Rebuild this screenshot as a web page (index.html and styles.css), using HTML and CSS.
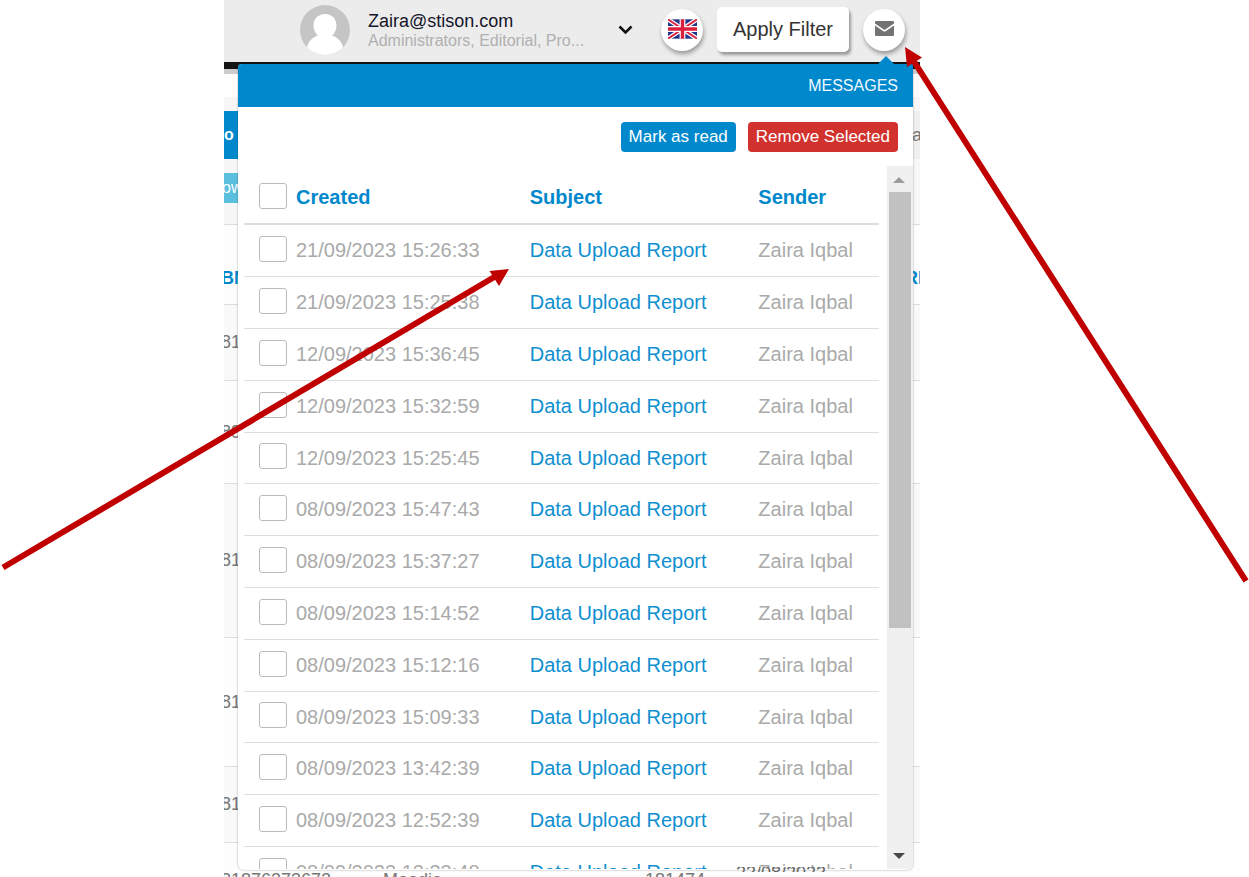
FILE: index.html
```html
<!DOCTYPE html>
<html lang="en">
<head>
<meta charset="utf-8">
<title>Messages</title>
<link rel="stylesheet" href="styles.css">
</head>
<body>
<div class="board">
  <main class="app">
    <header class="topbar">
      <svg class="avatar" viewBox="0 0 50 50" aria-hidden="true">
        <defs><clipPath id="disc"><circle cx="25" cy="25" r="25"/></clipPath></defs>
        <g clip-path="url(#disc)"><rect width="50" height="50" fill="#c5c5c5"/>
        <path d="M25 9c-7 0-11.500 5-11.500 11.500 0 4 1.500 7.500 4.500 10C12.500 32.500 8 36 7 43v9h36v-9c-1-7-5.500-10.500-11-12.500 3-2.500 4.500-6 4.500-10C36.500 14 32 9 25 9z" fill="#fff"/></g>
      </svg>
      <div class="user">
        <div class="user-name">Zaira@stison.com</div>
        <div class="user-roles">Administrators, Editorial, Pro...</div>
      </div>
      <button class="caret" aria-label="Account menu"><svg width="15" height="10" viewBox="0 0 15 10"><path d="M1.500 1.500l6 6 6-6" fill="none" stroke="#111" stroke-width="2.600"/></svg></button>
      <button class="round" aria-label="Language"><svg width="29" height="20" viewBox="0 0 60 40">
        <rect width="60" height="40" fill="#21348a"/>
        <path d="M0 0l60 40M60 0L0 40" stroke="#fff" stroke-width="9"/>
        <path d="M0 0l60 40M60 0L0 40" stroke="#dc2440" stroke-width="4"/>
        <path d="M30 0v40M0 20h60" stroke="#fff" stroke-width="12"/>
        <path d="M30 0v40M0 20h60" stroke="#dc1f3c" stroke-width="7"/></svg></button>
      <button class="filter">Apply Filter</button>
      <button class="round" aria-label="Messages"><svg width="19" height="15" viewBox="0 0 19 15">
        <path d="M1 0h17Q19 0 19 1v1.500L9.500 9 0 2.500V1Q0 0 1 0z" fill="#737373"/>
        <path d="M0 4.500l8 5.500q1.500 1 3 0l8-5.500V14q0 1-1 1H1Q0 15 0 14z" fill="#737373"/></svg></button>
    </header>

    <section class="page">
      <div class="band"></div>
      <div class="toolbar"><button class="tab">o</button><span class="tool-text">a</span></div>
      <div class="subbar"><button class="show">ow</button></div>
      <div class="grid-head"><span>BN</span><span class="head-end">RI</span></div>
      <div class="line line-s">81</div>
      <div class="line line-m alt">89</div>
      <div class="line line-xl">81</div>
      <div class="line line-l alt">81</div>
      <div class="line line-s">81</div>
      <div class="line line-s cells alt"><span>81876373672</span><span>Moodie</span><span>181474</span></div>
    </section>

    <section class="panel" aria-label="Messages">
      <h2 class="panel-title">MESSAGES</h2>
      <div class="panel-body">
        <div class="actions"><button class="btn btn-read">Mark as read</button><button class="btn btn-remove">Remove Selected</button></div>
        <div class="scroller">
          <table class="messages">
            <colgroup><col class="col-created"><col class="col-subject"><col class="col-sender"></colgroup>
            <thead><tr><th><label class="pick"><input type="checkbox">Created</label></th><th>Subject</th><th>Sender</th></tr></thead>
            <tbody>
              <tr><td><label class="pick"><input type="checkbox">21/09/2023 15:26:33</label></td><td><a href="#">Data Upload Report</a></td><td>Zaira Iqbal</td></tr>
              <tr><td><label class="pick"><input type="checkbox">21/09/2023 15:25:38</label></td><td><a href="#">Data Upload Report</a></td><td>Zaira Iqbal</td></tr>
              <tr><td><label class="pick"><input type="checkbox">12/09/2023 15:36:45</label></td><td><a href="#">Data Upload Report</a></td><td>Zaira Iqbal</td></tr>
              <tr><td><label class="pick"><input type="checkbox">12/09/2023 15:32:59</label></td><td><a href="#">Data Upload Report</a></td><td>Zaira Iqbal</td></tr>
              <tr><td><label class="pick"><input type="checkbox">12/09/2023 15:25:45</label></td><td><a href="#">Data Upload Report</a></td><td>Zaira Iqbal</td></tr>
              <tr><td><label class="pick"><input type="checkbox">08/09/2023 15:47:43</label></td><td><a href="#">Data Upload Report</a></td><td>Zaira Iqbal</td></tr>
              <tr><td><label class="pick"><input type="checkbox">08/09/2023 15:37:27</label></td><td><a href="#">Data Upload Report</a></td><td>Zaira Iqbal</td></tr>
              <tr><td><label class="pick"><input type="checkbox">08/09/2023 15:14:52</label></td><td><a href="#">Data Upload Report</a></td><td>Zaira Iqbal</td></tr>
              <tr><td><label class="pick"><input type="checkbox">08/09/2023 15:12:16</label></td><td><a href="#">Data Upload Report</a></td><td>Zaira Iqbal</td></tr>
              <tr><td><label class="pick"><input type="checkbox">08/09/2023 15:09:33</label></td><td><a href="#">Data Upload Report</a></td><td>Zaira Iqbal</td></tr>
              <tr><td><label class="pick"><input type="checkbox">08/09/2023 13:42:39</label></td><td><a href="#">Data Upload Report</a></td><td>Zaira Iqbal</td></tr>
              <tr><td><label class="pick"><input type="checkbox">08/09/2023 12:52:39</label></td><td><a href="#">Data Upload Report</a></td><td>Zaira Iqbal</td></tr>
              <tr><td><label class="pick"><input type="checkbox">08/09/2023 12:33:48</label></td><td><a href="#">Data Upload Report</a></td><td>Zaira Iqbal</td></tr>
            </tbody>
          </table>
          <div class="track" aria-hidden="true">
            <svg class="step" viewBox="0 0 24 26"><path d="M6 17l6-6 6 6z" fill="#9c9c9c"/></svg>
            <div class="rail"><div class="thumb"></div></div>
            <svg class="step" viewBox="0 0 24 26"><path d="M6 10l6 6 6-6z" fill="#484848"/></svg>
          </div>
        </div>
      </div>
    </section>
    <div class="date-peek">23/08/2023</div>
  </main>

  <svg class="arrows" viewBox="0 0 1249 877" preserveAspectRatio="none" aria-hidden="true">
    <path d="M3 567.500L496 276M1246 581L913 60" stroke="#c00000" stroke-width="6" fill="none"/>
    <path d="M509 269l-19.500 2 9.500 15zM905 47l2 20 15-9.500z" fill="#c00000"/>
  </svg>
</div>
</body>
</html>
```
FILE: styles.css
```css
* { box-sizing: border-box; }
body {
  margin: 0;
  background: #fff;
  font-family: "Liberation Sans", Arial, sans-serif;
  font-size: 20px;
  color: #aaa;
}
button { font: inherit; border: 0; padding: 0; cursor: pointer; }
.board {
  position: relative;
  display: grid;
  grid-template-columns: 224fr 696fr 329fr;
  height: 100vh;
  overflow: hidden;
}
.app {
  grid-column: 2;
  position: relative;
  min-width: 0;
  height: 100vh;
  overflow: hidden;
}
.arrows {
  position: absolute;
  inset: 0;
  width: 100%;
  height: 100%;
  z-index: 5;
  pointer-events: none;
}

/* Top bar */
.topbar {
  display: flex;
  align-items: center;
  gap: 14px;
  height: 62px;
  padding: 0 15px 3px 76px;
  background: #ececec;
}
.avatar { width: 50px; height: 50px; flex: none; }
.user { flex: 1; min-width: 0; padding: 2px 0 0 4px; white-space: nowrap; }
.user-name { color: #15152a; font-size: 18px; line-height: 20px; }
.user-roles { color: #b0b0b0; font-size: 16px; line-height: 20px; }
.caret { background: none; display: flex; padding-right: 14px; }
.round {
  display: flex;
  align-items: center;
  justify-content: center;
  width: 42px;
  height: 42px;
  flex: none;
  padding-bottom: 2px;
  border-radius: 50%;
  background: #fff;
  box-shadow: 1px 3px 4px rgba(0, 0, 0, .35);
}
.filter {
  width: 132px;
  height: 45px;
  flex: none;
  background: #fff;
  color: #333;
  border-radius: 5px;
  box-shadow: 2px 3px 3px rgba(0, 0, 0, .35);
}

/* Page behind the messages panel */
.page { color: #777; font-size: 18px; background: #f7f7f7; }
.band {
  height: 35px;
  background: linear-gradient(#151515 7px, #ccc 7px, #ccc 12px, #fff 12px);
}
.toolbar {
  display: flex;
  justify-content: space-between;
  align-items: center;
  height: 48px;
  margin-top: 14px;
  background: #efefef;
}
.tab {
  width: 40px;
  height: 48px;
  background: #0088cc;
  color: #fff;
  font-weight: bold;
  font-size: 16px;
  text-align: left;
}
.tool-text { width: 8px; overflow: hidden; }
.subbar { height: 66px; padding-top: 14px; border-bottom: 1px solid #ddd; }
.show {
  width: 40px;
  height: 30px;
  background: #5bc0de;
  color: #fff;
  font-size: 16px;
  text-align: left;
  text-indent: -2px;
}
.grid-head {
  display: flex;
  justify-content: space-between;
  align-items: center;
  height: 79px;
  padding-top: 28px;
  color: #0088cc;
  font-weight: bold;
  text-indent: -3px;
  background: #fdfdfd;
}
.head-end { width: 12px; overflow: hidden; }
.line {
  display: flex;
  align-items: center;
  border-top: 1px solid #ddd;
  background: #f9f9f9;
  text-indent: -3px;
}
.alt { background: #fdfdfd; }
.line-s { height: 76px; }
.line-m { height: 103px; }
.line-l { height: 129px; }
.line-xl { height: 154px; }
.cells {
  display: grid;
  grid-template-columns: 162fr 262fr 272fr;
}

/* Messages panel */
.panel {
  position: absolute;
  top: 64px;
  bottom: 7px;
  left: 14px;
  right: 7px;
  display: flex;
  flex-direction: column;
  background: #fff;
  border-radius: 4px 0 6px 6px;
  box-shadow: 0 0 2px rgba(0, 0, 0, .4);
}
.panel::before {
  content: "";
  position: absolute;
  top: -8px;
  right: 19px;
  border: 8px solid transparent;
  border-top: 0;
  border-bottom-color: #0088cc;
}
.panel-title {
  margin: 0;
  padding-right: 15px;
  background: #0088cc;
  border-radius: 4px 0 0 0;
  color: #f0faff;
  font-size: 16px;
  font-weight: normal;
  line-height: 43px;
  text-align: right;
}
.panel-body {
  flex: 1;
  min-height: 0;
  display: flex;
  flex-direction: column;
  padding-bottom: 1px;
}
.actions {
  display: flex;
  justify-content: flex-end;
  gap: 12px;
  padding: 15px 15px 14px;
}
.btn {
  height: 30px;
  padding: 0 8px;
  border-radius: 4px;
  color: #fff;
  font-size: 17px;
}
.btn-read { background: #0088cc; }
.btn-remove { background: #d2322d; }
.scroller {
  flex: 1;
  min-height: 0;
  display: flex;
  align-items: flex-start;
  gap: 8px;
  padding-left: 6px;
  overflow: hidden;
  border-radius: 0 0 6px 6px;
}
.messages {
  flex: 1;
  table-layout: fixed;
  border-collapse: separate;
  border-spacing: 0;
}
.col-created { width: 45%; }
.col-subject { width: 36%; }
.messages th, .messages td {
  height: 52px;
  padding: 0;
  text-align: left;
  font-weight: normal;
  white-space: nowrap;
  border-bottom: 1px solid #ddd;
}
.messages tr:nth-child(5n) td { height: 51px; }
.messages th {
  height: 59px;
  padding-top: 6px;
  color: #0088cc;
  font-weight: bold;
  border-bottom-width: 2px;
}
.messages a { color: #0f8fd0; text-decoration: none; }
.pick { display: flex; align-items: center; gap: 9px; padding-left: 15px; }
.pick input {
  appearance: none;
  width: 28px;
  height: 26px;
  margin: 0 0 4px;
  border: 1px solid #bbb;
  border-radius: 3px;
  background: #fff;
}
.track {
  align-self: stretch;
  width: 26px;
  display: flex;
  flex-direction: column;
  background: #f0f0f0;
}
.step { width: 24px; height: 26px; flex: none; }
.rail { flex: 1; padding: 0 2px; }
.thumb { height: 67%; background: #c1c1c1; }

/* Sliver of the row date that shows above the panel edge */
.date-peek {
  position: absolute;
  right: 94px;
  bottom: 5px;
  height: 5px;
  overflow: hidden;
  color: #666;
  font-size: 18px;
  line-height: 12px;
}
```
